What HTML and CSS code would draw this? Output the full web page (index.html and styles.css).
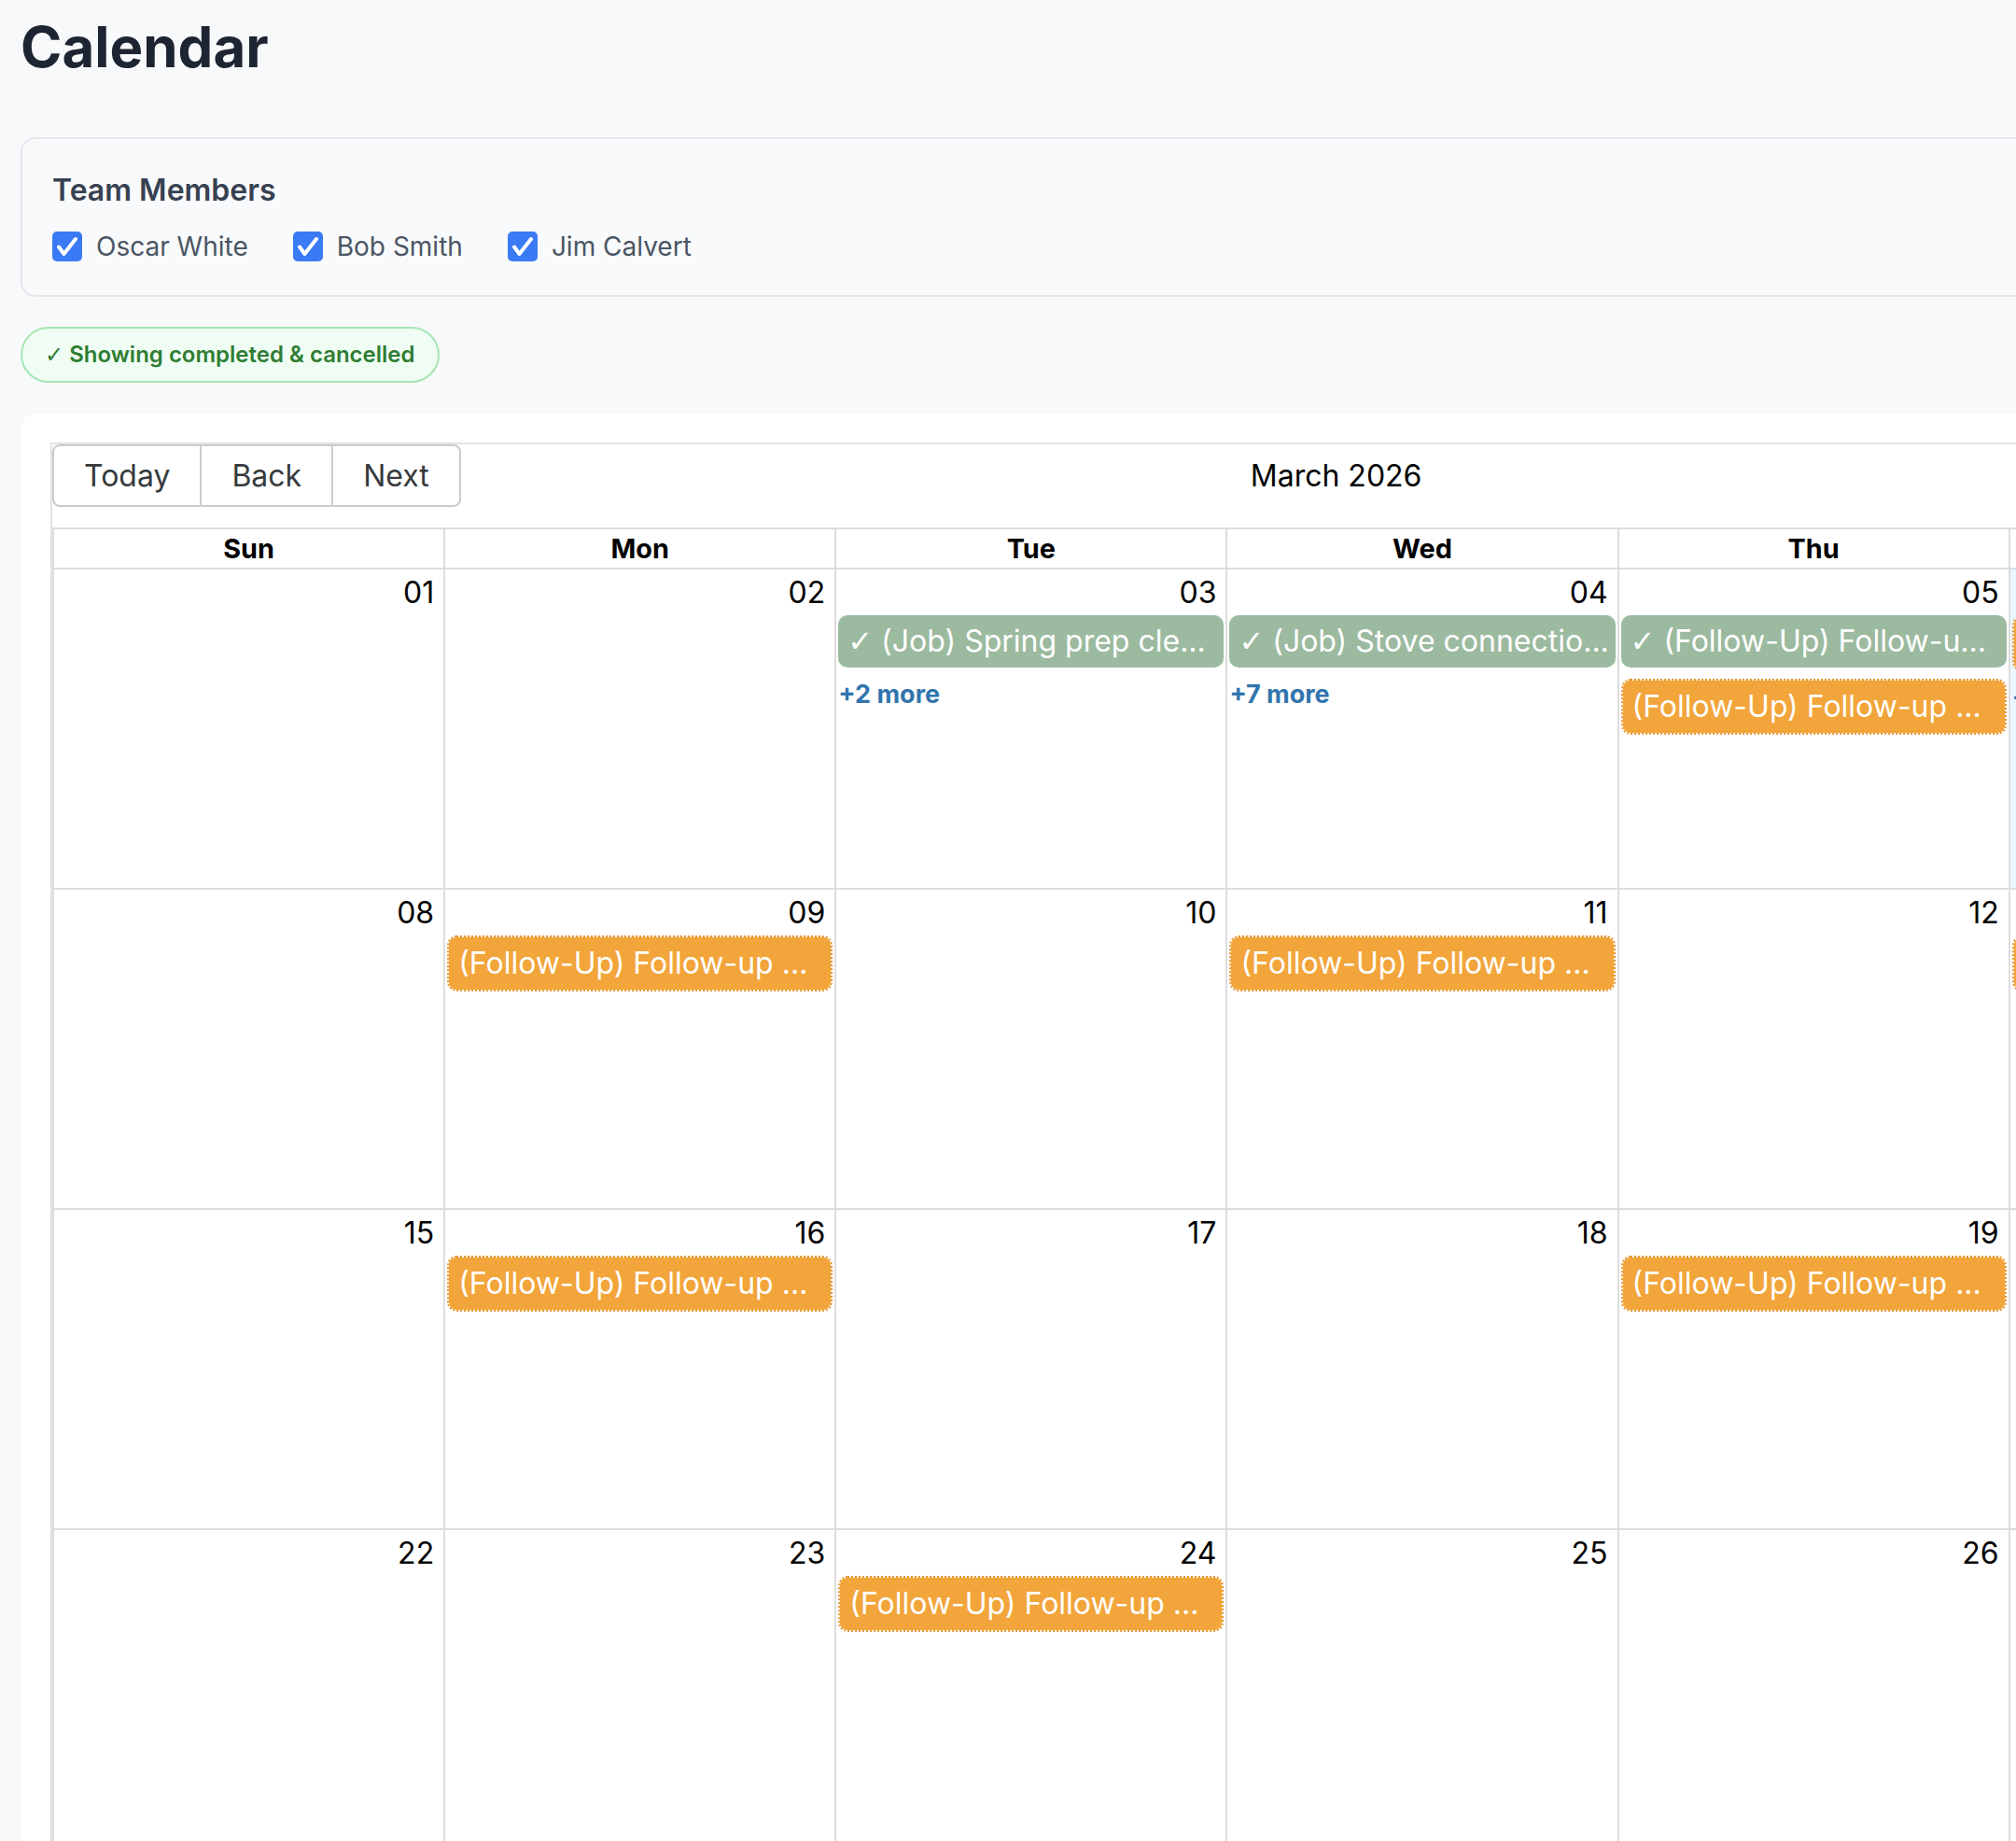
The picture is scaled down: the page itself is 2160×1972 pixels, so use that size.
FILE: index.html
```html
<!DOCTYPE html>
<html lang="en">
<head>
<meta charset="utf-8">
<title>Calendar</title>
<link rel="stylesheet" href="styles.css">
</head>
<body>
<main class="page">
  <h1 class="page-title">Calendar</h1>

  <section class="team-card">
    <h2 class="team-title">Team Members</h2>
    <div class="team-list">
      <label class="member">
        <span class="check"><svg viewBox="0 0 32 32" width="32" height="32"><rect width="32" height="32" rx="5" fill="#3a7bf5"/><path d="M7 16.5l5.5 7.5L25 8" fill="none" stroke="#fff" stroke-width="4" stroke-linecap="round" stroke-linejoin="round"/></svg></span>
        Oscar White
      </label>
      <label class="member">
        <span class="check"><svg viewBox="0 0 32 32" width="32" height="32"><rect width="32" height="32" rx="5" fill="#3a7bf5"/><path d="M7 16.5l5.5 7.5L25 8" fill="none" stroke="#fff" stroke-width="4" stroke-linecap="round" stroke-linejoin="round"/></svg></span>
        Bob Smith
      </label>
      <label class="member">
        <span class="check"><svg viewBox="0 0 32 32" width="32" height="32"><rect width="32" height="32" rx="5" fill="#3a7bf5"/><path d="M7 16.5l5.5 7.5L25 8" fill="none" stroke="#fff" stroke-width="4" stroke-linecap="round" stroke-linejoin="round"/></svg></span>
        Jim Calvert
      </label>
    </div>
  </section>

  <div class="status-pill"><span class="tick">✓</span> Showing completed &amp; cancelled</div>

  <section class="calendar-card">
    <div class="calendar">
      <div class="toolbar">
        <span class="btn-group">
          <button type="button">Today</button>
          <button type="button">Back</button>
          <button type="button">Next</button>
        </span>
        <span class="toolbar-label">March 2026</span>
        <span class="btn-group">
          <button type="button" class="is-active">Month</button>
          <button type="button">Week</button>
          <button type="button">Day</button>
          <button type="button">Agenda</button>
        </span>
      </div>

      <div class="month">
        <div class="month-header">
          <div class="day-name">Sun</div>
          <div class="day-name">Mon</div>
          <div class="day-name">Tue</div>
          <div class="day-name">Wed</div>
          <div class="day-name">Thu</div>
          <div class="day-name">Fri</div>
          <div class="day-name">Sat</div>
        </div>

        <div class="week">
          <div class="day"><div class="date">01</div></div>
          <div class="day"><div class="date">02</div></div>
          <div class="day">
            <div class="date">03</div>
            <div class="events">
              <div class="event done"><span class="tick">✓</span> (Job) Spring prep cle...</div>
              <div class="more">+2 more</div>
            </div>
          </div>
          <div class="day">
            <div class="date">04</div>
            <div class="events">
              <div class="event done"><span class="tick">✓</span> (Job) Stove connectio...</div>
              <div class="more">+7 more</div>
            </div>
          </div>
          <div class="day">
            <div class="date">05</div>
            <div class="events">
              <div class="event done"><span class="tick">✓</span> (Follow-Up) Follow-u...</div>
              <div class="event follow">(Follow-Up) Follow-up ...</div>
            </div>
          </div>
          <div class="day today">
            <div class="date">06</div>
            <div class="events">
              <div class="event follow">(Follow-Up) Follow-up ...</div>
              <div class="more">+3 more</div>
            </div>
          </div>
          <div class="day"><div class="date">07</div></div>
        </div>

        <div class="week">
          <div class="day"><div class="date">08</div></div>
          <div class="day">
            <div class="date">09</div>
            <div class="events"><div class="event follow">(Follow-Up) Follow-up ...</div></div>
          </div>
          <div class="day"><div class="date">10</div></div>
          <div class="day">
            <div class="date">11</div>
            <div class="events"><div class="event follow">(Follow-Up) Follow-up ...</div></div>
          </div>
          <div class="day"><div class="date">12</div></div>
          <div class="day">
            <div class="date">13</div>
            <div class="events"><div class="event follow">(Follow-Up) Follow-up ...</div></div>
          </div>
          <div class="day"><div class="date">14</div></div>
        </div>

        <div class="week">
          <div class="day"><div class="date">15</div></div>
          <div class="day">
            <div class="date">16</div>
            <div class="events"><div class="event follow">(Follow-Up) Follow-up ...</div></div>
          </div>
          <div class="day"><div class="date">17</div></div>
          <div class="day"><div class="date">18</div></div>
          <div class="day">
            <div class="date">19</div>
            <div class="events"><div class="event follow">(Follow-Up) Follow-up ...</div></div>
          </div>
          <div class="day"><div class="date">20</div></div>
          <div class="day"><div class="date">21</div></div>
        </div>

        <div class="week">
          <div class="day"><div class="date">22</div></div>
          <div class="day"><div class="date">23</div></div>
          <div class="day">
            <div class="date">24</div>
            <div class="events"><div class="event follow">(Follow-Up) Follow-up ...</div></div>
          </div>
          <div class="day"><div class="date">25</div></div>
          <div class="day"><div class="date">26</div></div>
          <div class="day"><div class="date">27</div></div>
          <div class="day"><div class="date">28</div></div>
        </div>

        <div class="week">
          <div class="day"><div class="date">29</div></div>
          <div class="day"><div class="date">30</div></div>
          <div class="day"><div class="date">31</div></div>
          <div class="day off-range"><div class="date">01</div></div>
          <div class="day off-range"><div class="date">02</div></div>
          <div class="day off-range"><div class="date">03</div></div>
          <div class="day off-range"><div class="date">04</div></div>
        </div>
      </div>
    </div>
  </section>
</main>
</body>
</html>
```

FILE: styles.css
```css
* {
  box-sizing: border-box;
}

html,
body {
  margin: 0;
  scrollbar-width: none;
}

body {
  background: #f8f9fb;
  font-family: Inter, "Noto Sans", "Liberation Sans", sans-serif;
  color: #1f2937;
}

/* page wrapper grows with the wide month grid */
.page {
  width: max-content;
  min-width: 100%;
  padding: 14px 22px 0;
}

.page-title {
  margin: 0 0 61px;
  font-size: 60px;
  line-height: 72px;
  font-weight: 700;
  color: #1e2532;
}

/* check glyph drawn from a font that has a bolder tick */
.tick {
  font-family: "DejaVu Sans", sans-serif;
  font-weight: 700;
}

/* team member filter */
.team-card {
  background: #f9fafb;
  border: 2px solid #e5e7eb;
  border-radius: 16px;
  padding: 32px 32px 31px;
}

.team-title {
  margin: 0 0 17px;
  font-size: 32px;
  line-height: 45px;
  font-weight: 600;
  color: #374151;
}

.team-list {
  display: flex;
  gap: 48px;
}

.member {
  display: flex;
  align-items: center;
  height: 42px;
  font-size: 28px;
  color: #4b5563;
}

.check {
  display: flex;
  width: 32px;
  height: 32px;
  margin-right: 15px;
}

/* completed / cancelled toggle */
.status-pill {
  display: inline-block;
  margin-top: 32px;
  padding: 9px 24px;
  border: 2px solid #a3e6b3;
  border-radius: 999px;
  background: #f0fdf4;
  color: #2e7d32;
  font-size: 24px;
  line-height: 37px;
  font-weight: 600;
}

/* calendar */
.calendar-card {
  margin-top: 33px;
  background: #fff;
  border-radius: 16px;
  box-shadow: 0 1px 3px rgba(15, 23, 42, 0.06);
  padding: 31px 32px 0;
}

.calendar {
  width: 2940px;
  border: 2px solid #e2e2e2;
  border-bottom: 0;
  color: #000;
}

.toolbar {
  display: flex;
  align-items: center;
  margin-bottom: 22px;
  font-size: 32px;
}

.btn-group {
  display: inline-flex;
}

.btn-group button {
  font: inherit;
  line-height: normal;
  color: #373a3c;
  background: none;
  border: 2px solid #ccc;
  padding: 12px 32px;
  border-radius: 0;
  white-space: nowrap;
}

.btn-group button + button {
  margin-left: -2px;
}

.btn-group button:first-child {
  border-radius: 8px 0 0 8px;
}

.btn-group button:last-child {
  border-radius: 0 8px 8px 0;
}

.btn-group button.is-active {
  background: #e6e6e6;
  border-color: #adadad;
  box-shadow: inset 0 6px 10px rgba(0, 0, 0, 0.125);
}

.toolbar-label {
  flex: 1;
  padding: 0 20px;
  text-align: center;
}

.month {
  border: 2px solid #ddd;
}

.month-header,
.week {
  display: flex;
}

.day-name,
.day {
  flex: 1 0 0;
  min-width: 0;
}

.day-name + .day-name,
.day + .day {
  border-left: 2px solid #ddd;
}

.month-header {
  border-bottom: 2px solid #ddd;
}

.day-name {
  height: 41px;
  line-height: 41px;
  text-align: center;
  font-size: 28.8px;
  font-weight: 700;
}

.week {
  height: 341px;
}

.week + .week {
  height: 343px;
  border-top: 2px solid #ddd;
}

.day {
  padding-top: 5px;
}

.day.today {
  background: #eaf6ff;
}

.day.off-range {
  background: #e6e6e6;
}

.day.off-range .date {
  color: #999;
}

.date {
  padding-right: 10px;
  text-align: right;
  font-size: 32px;
  line-height: 39px;
}

.events {
  margin-top: 5px;
}

.event {
  margin: 0 2px 12px;
  padding: 4px 2px 4px 10px;
  border-radius: 10px;
  color: #fff;
  font-size: 32px;
  line-height: 48px;
  white-space: nowrap;
  overflow: hidden;
  text-overflow: ellipsis;
}

.event.done {
  background: #9bba9f;
}

.event.follow {
  background: #f2a53b;
  background-clip: padding-box;
  border: 2px dotted #e8962c;
}

.more {
  margin-left: 2px;
  font-size: 27px;
  font-weight: 700;
  color: #3174ad;
}
```
